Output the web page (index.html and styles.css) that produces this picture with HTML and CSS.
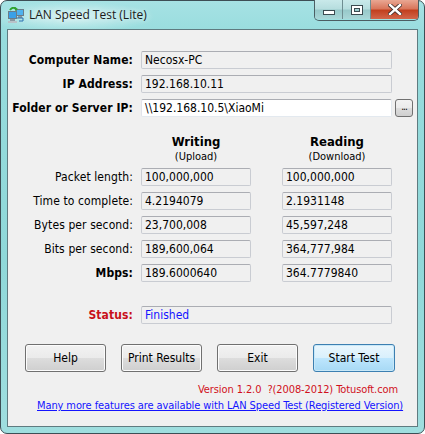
FILE: index.html
```html
<!DOCTYPE html>
<html>
<head>
<meta charset="utf-8">
<link rel="stylesheet" href="styles.css">
<title>LAN Speed Test (Lite)</title>
</head>
<body>
<div class="window">
  <div class="titlebar">
    <svg class="app-icon" width="18" height="17" viewBox="0 0 18 17">
      <rect x="1" y="4" width="9" height="8" fill="#6a7d8a"/>
      <rect x="2" y="5" width="7" height="6" fill="#3aa0e8"/>
      <rect x="3" y="12" width="5" height="2" fill="#8a97a0"/>
      <rect x="1" y="14" width="9" height="2" fill="#b8c2c8"/>
      <rect x="9" y="2" width="8" height="7" fill="#6a7d8a"/>
      <rect x="10" y="3" width="6" height="5" fill="#4fb2ef"/>
      <rect x="11" y="9" width="4" height="2" fill="#8a97a0"/>
      <path d="M10 11 H16 V14 H12" fill="none" stroke="#2a6fb0" stroke-width="1"/>
      <path d="M3 3 Q6 -1 9 2" fill="none" stroke="#2fa32f" stroke-width="2"/>
      <path d="M8 0 L11 2 L8 4 Z" fill="#2fa32f"/>
    </svg>
    <span class="title">LAN Speed Test (Lite)</span>
    <div class="winbtns">
      <div class="wb wb-min"><span class="min-glyph"></span></div>
      <div class="wb wb-max"><span class="max-glyph"></span></div>
      <div class="wb wb-close">
        <svg width="14" height="11" viewBox="0 0 14 11">
          <path d="M2 1 L12 10 M12 1 L2 10" stroke="#3b2a28" stroke-width="4" stroke-linecap="square"/>
          <path d="M2 1 L12 10 M12 1 L2 10" stroke="#ffffff" stroke-width="2.4" stroke-linecap="square"/>
        </svg>
      </div>
    </div>
  </div>
  <div class="client">
    <div class="form">
      <label class="lbl bold">Computer Name:</label>
      <div class="field wide">Necosx-PC</div>
      <div></div>

      <label class="lbl bold">IP Address:</label>
      <div class="field wide">192.168.10.11</div>
      <div></div>

      <label class="lbl bold">Folder or Server IP:</label>
      <div class="field wide edit">\\192.168.10.5\XiaoMi</div>
      <div class="browse">...</div>

      <div></div>
      <div class="colhead"><b>Writing</b><small>(Upload)</small></div>
      <div class="colhead"><b>Reading</b><small>(Download)</small></div>
      <div></div>

      <label class="lbl">Packet length:</label>
      <div class="field">100,000,000</div>
      <div class="field">100,000,000</div>
      <div></div>

      <label class="lbl">Time to complete:</label>
      <div class="field">4.2194079</div>
      <div class="field">2.1931148</div>
      <div></div>

      <label class="lbl">Bytes per second:</label>
      <div class="field">23,700,008</div>
      <div class="field">45,597,248</div>
      <div></div>

      <label class="lbl">Bits per second:</label>
      <div class="field">189,600,064</div>
      <div class="field">364,777,984</div>
      <div></div>

      <label class="lbl bold">Mbps:</label>
      <div class="field">189.6000640</div>
      <div class="field">364.7779840</div>
      <div></div>

      <div class="gap-row"></div>

      <label class="lbl bold status-lbl">Status:</label>
      <div class="field wide status">Finished</div>
      <div></div>
    </div>

    <div class="buttons">
      <button class="btn">Help</button>
      <button class="btn">Print Results</button>
      <button class="btn">Exit</button>
      <button class="btn default">Start Test</button>
    </div>

    <div class="version">Version 1.2.0&nbsp; ?(2008-2012) Totusoft.com</div>
    <a class="link" href="#">Many more features are available with LAN Speed Test (Registered Version)</a>
  </div>
</div>
</body>
</html>
```
FILE: styles.css
```css
html, body {
  margin: 0;
  padding: 0;
  width: 425px;
  height: 434px;
  overflow: hidden;
  background: #ffffff;
}

.window {
  box-sizing: border-box;
  width: 425px;
  height: 434px;
  border: 1px solid #3d4e55;
  border-radius: 7px;
  background:
    radial-gradient(ellipse 120px 22px at 70px 16px, rgba(255,255,255,0.55), rgba(255,255,255,0) 70%),
    linear-gradient(180deg, #a6e2e4 0%, #97dcdd 8%, #8fd8d9 60%, #9fdedf 100%);
  display: flex;
  flex-direction: column;
  font-family: "DejaVu Sans Condensed", "DejaVu Sans", sans-serif;
  font-stretch: condensed;
  font-size: 12px;
  color: #000;
}

.titlebar {
  height: 28px;
  display: flex;
  align-items: flex-start;
  position: relative;
}

.app-icon {
  margin: 6px 0 0 6px;
}

.title {
  font-family: "Open Sans", "Noto Sans", sans-serif;
  font-stretch: normal;
  font-size: 12px;
  color: #1a1a1a;
  margin: 5px 0 0 4px;
  text-shadow: 0 0 6px rgba(255,255,255,0.9);
}

.winbtns {
  position: absolute;
  top: -1px;
  right: 5px;
  display: flex;
  height: 20px;
  border: 1px solid #4b5e63;
  border-top: none;
  border-radius: 0 0 5px 5px;
  overflow: hidden;
}

.wb {
  height: 19px;
  display: flex;
  align-items: center;
  justify-content: center;
}

.wb-min, .wb-max {
  width: 27px;
  background: linear-gradient(180deg, #c9e9ea 0%, #b7dedf 45%, #98c9ca 55%, #a9d7d8 100%);
  border-right: 1px solid #6e8d91;
}

.wb-close {
  width: 47px;
  background: linear-gradient(180deg, #e9a793 0%, #d9775c 45%, #c2401f 55%, #d2664a 100%);
}

.min-glyph {
  display: block;
  width: 10px;
  height: 3px;
  margin-top: 6px;
  background: #fff;
  border: 1px solid #3b4a50;
}

.max-glyph {
  display: block;
  width: 6px;
  height: 4px;
  border: 2px solid #fff;
  outline: 1px solid #3b4a50;
  box-shadow: inset 0 0 0 1px #3b4a50;
}

.client {
  flex: 1;
  margin: 0 6px 6px 6px;
  border: 1px solid #5f7b80;
  background: #f0f0f0;
  display: flex;
  flex-direction: column;
}

.form {
  display: grid;
  grid-template-columns: 133px 141px 110px 23px;
  grid-template-rows: 18px 18px 18px 39px 18px 18px 18px 18px 18px 12px 18px;
  row-gap: 6px;
  margin-top: 21px;
  align-items: center;
}

.gap-row {
  grid-column: 1 / 5;
}

.lbl {
  justify-self: end;
  padding-right: 8px;
  white-space: nowrap;
  letter-spacing: 0.1px;
}

.bold {
  font-weight: bold;
}

.status-lbl {
  color: #c8101a;
}

.field {
  box-sizing: border-box;
  width: 110px;
  height: 18px;
  line-height: 16px;
  padding: 0 3px;
  border: 1px solid #c9ccd2;
  border-top-color: #abadb3;
  border-radius: 2px;
  background: #f0f0f0;
  white-space: nowrap;
  overflow: hidden;
}

.field.wide {
  width: 251px;
  grid-column: 2 / 4;
}

.field.edit {
  background: #ffffff;
  border-color: #e3e9ef;
  border-top-color: #abadb3;
  border-left-color: #e2e3ea;
}

.status {
  color: #1414ff;
}

.browse {
  box-sizing: border-box;
  width: 18px;
  height: 18px;
  margin-left: 3px;
  border: 1px solid #707070;
  border-radius: 3px;
  background: linear-gradient(180deg, #f2f2f2 0%, #ebebeb 49%, #dddddd 50%, #cfcfcf 100%);
  font-size: 10px;
  line-height: 14px;
  text-align: center;
  letter-spacing: -1px;
}

.colhead {
  display: flex;
  flex-direction: column;
  align-items: center;
  width: 110px;
  align-self: start;
  margin-top: 11px;
}

.colhead b {
  font-size: 13px;
  line-height: 16px;
}

.colhead small {
  font-size: 11px;
  line-height: 13px;
}

.buttons {
  display: flex;
  gap: 15px;
  margin: 20px 0 0 17px;
}

.btn {
  box-sizing: border-box;
  width: 81px;
  height: 28px;
  border: 1px solid #707070;
  border-radius: 3px;
  background: linear-gradient(180deg, #f2f2f2 0%, #ebebeb 49%, #dddddd 50%, #cfcfcf 100%);
  box-shadow: inset 0 0 0 1px #fcfcfc;
  font-family: "DejaVu Sans Condensed", "DejaVu Sans", sans-serif;
  font-stretch: condensed;
  font-size: 12px;
  color: #000;
  padding: 0;
}

.btn.default {
  width: 82px;
  border-color: #3c7fb1;
  background: linear-gradient(180deg, #eaf6fd 0%, #d9f0fc 49%, #bee6fd 50%, #a7d9f5 100%);
  box-shadow: inset 0 0 0 1px #c8e8f8;
}

.version {
  color: #d0101c;
  font-size: 11px;
  letter-spacing: -0.1px;
  text-align: right;
  margin: 10px 19px 0 0;
  line-height: 15px;
}

.link {
  color: #1414ff;
  font-size: 11px;
  letter-spacing: -0.1px;
  text-decoration: underline;
  margin: 1px 0 0 29px;
  line-height: 15px;
  white-space: nowrap;
  align-self: flex-start;
}
```
